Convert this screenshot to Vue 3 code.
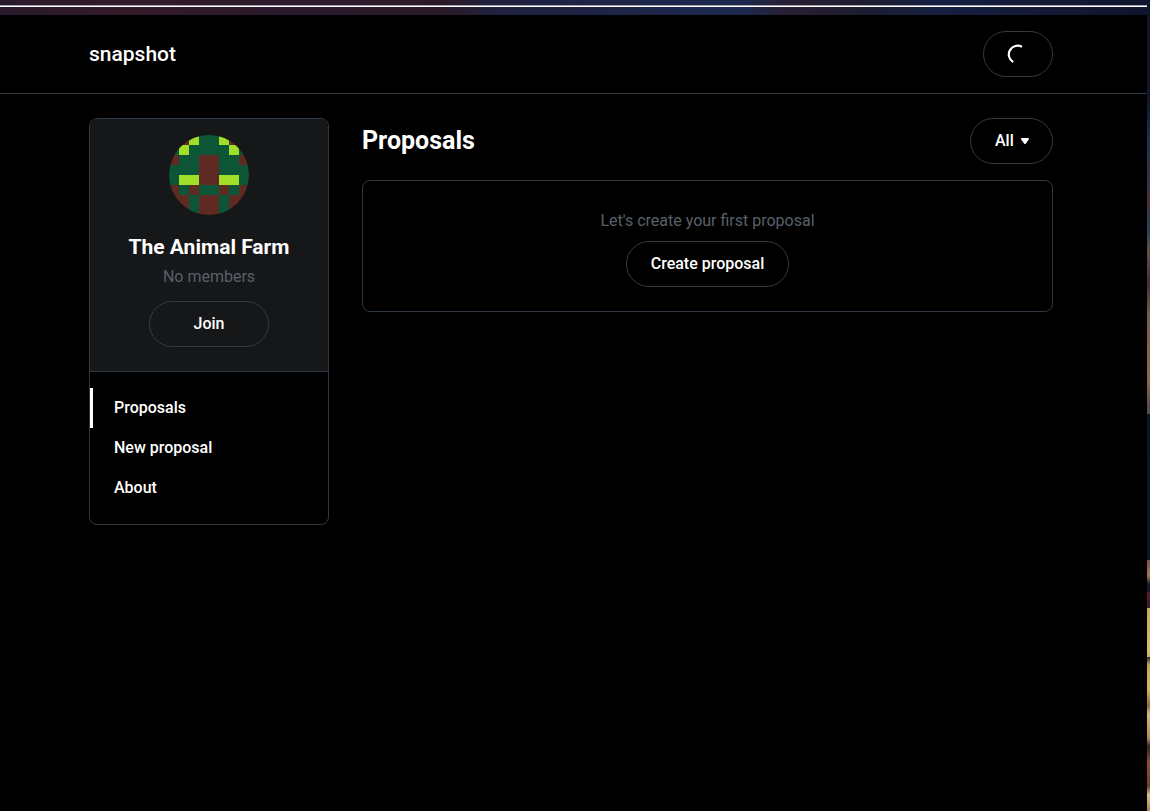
<script setup>
import { ref } from 'vue'

const filter = ref('all')
const active = ref('Proposals')
const links = ['Proposals', 'New proposal', 'About']

// Left half of the avatar; every row is mirrored. g: green, b: brown, l: lime
const rows = ['gblg', 'glgg', 'bggb', 'gggb', 'gllb', 'bgbg', 'bbgb', 'bbgb']
const cells = rows.flatMap((row, y) =>
  [...row, ...[...row].reverse()].map((tone, x) => ({ tone, x, y }))
)
</script>

<template>
  <div class="desktop">
    <div class="window-edge"></div>
    <div class="app">
      <header class="topbar">
        <a class="brand" href="#">snapshot</a>
        <button class="pill account" type="button" aria-label="Loading account">
          <svg width="20" height="20" viewBox="0 0 20 20" fill="none" aria-hidden="true">
            <path d="M18 2.900A8.600 8.600 0 0 0 9.200 18.100" stroke="#fff" stroke-width="2.200" />
          </svg>
        </button>
      </header>

      <div class="layout">
        <aside class="space">
          <div class="profile">
            <svg class="avatar" viewBox="0 0 8 8" shape-rendering="crispEdges" aria-hidden="true">
              <rect v-for="c in cells" :key="`${c.x}-${c.y}`" :class="c.tone" :x="c.x" :y="c.y" width="1" height="1" />
            </svg>
            <h2>The Animal Farm</h2>
            <p class="muted">No members</p>
            <button class="pill join" type="button">Join</button>
          </div>
          <nav>
            <a
              v-for="link in links"
              :key="link"
              href="#"
              :class="{ active: link === active }"
              @click.prevent="active = link"
            >{{ link }}</a>
          </nav>
        </aside>

        <main>
          <div class="heading">
            <h1>Proposals</h1>
            <div class="filter">
              <select v-model="filter" class="pill" aria-label="Filter proposals">
                <option value="all">All</option>
              </select>
              <svg width="8" height="7" viewBox="0 0 8 7" fill="#fff" aria-hidden="true">
                <path d="M0.800 0h6.400c.8 0 1 .8.6 1.400L4.700 5.800c-.4.5-1 .5-1.400 0L.2 1.400C-.2.8 0 0 .8 0z" />
              </svg>
            </div>
          </div>
          <section class="empty">
            <p class="muted">Let's create your first proposal</p>
            <button class="pill" type="button">Create proposal</button>
          </section>
        </main>
      </div>
    </div>
  </div>
</template>

<style>
body {
  background: #000;
}
</style>

<style scoped>
* {
  box-sizing: border-box;
}
.desktop {
  display: flex;
  flex-direction: column;
  min-height: 100vh;
  padding-right: 3px;
  font: 500 16px/24px Roboto, sans-serif;
  color: #fff;
  background: linear-gradient(
    #10152d 0, #10152d 12%, #1c3154 17%, #45323f 25%, #24405a 28%, #655049 31%, #492d36 35%,
    #785c4c 39%, #8a6848 47%, #5b4b4d 50%, #5b4b4d 51%, #0b1427 51%, #0c1626 69%,
    #7d5148 69%, #a87761 71%, #1d1728 72%, #181426 73%, #641923 73%, #39182a 75%,
    #c7a961 75%, #d8bd75 80%, #d0b26a 81%, #2a201b 81%, #c7a560 82%, #d8b569 85%,
    #8f6940 87%, #d8b978 88%, #b88b54 91%, #392226 92%, #8c4c37 94%, #71402f 97%,
    #dbbe88 98%, #ab8350 100%
  );
}
.window-edge {
  height: 15px;
  margin-right: -3px;
  background:
    linear-gradient(#a29fae, #a29fae) 0 5px / calc(100% - 3px) 1px no-repeat,
    linear-gradient(#fff, #fff) 0 6px / calc(100% - 3px) 1px no-repeat,
    linear-gradient(90deg, #281a2b, #341a29 11%, #2a1a2c 25%, #2a1a29 39%, #20213f 43%,
      #1d2548 56%, #1c2a50 64%, #281e31 69%, #1d1d30 75%, #151f43 82%, #141a35 91%, #10152d);
}
.app {
  flex: 1;
  background: #000;
}
.topbar {
  display: flex;
  align-items: center;
  justify-content: space-between;
  padding: 16px 94px 16px 89px;
  border-bottom: 1px solid #2f3943;
}
.brand {
  font-size: 21px;
  color: #fff;
  text-decoration: none;
}
.pill {
  height: 46px;
  padding: 0 24px;
  border: 1px solid #323b44;
  border-radius: 23px;
  background: transparent;
  color: #fff;
  font: inherit;
  text-align: center;
  cursor: pointer;
}
.account {
  display: flex;
  align-items: center;
  width: 70px;
  padding: 0 20px;
}
.layout {
  display: flex;
  align-items: flex-start;
  gap: 33px;
  padding: 24px 94px 24px 89px;
}
.space {
  flex: 0 0 240px;
  overflow: hidden;
  border: 1px solid #2f3943;
  border-radius: 8px;
}
.profile {
  display: flex;
  flex-direction: column;
  align-items: center;
  padding: 16px 16px 24px;
  border-bottom: 1px solid #2f3943;
  background: #161718;
}
.avatar {
  width: 80px;
  height: 80px;
  border-radius: 50%;
}
.g {
  fill: #0c5637;
}
.b {
  fill: #5f2a22;
}
.l {
  fill: #a2df28;
}
h1,
h2,
p {
  margin: 0;
}
h2 {
  margin-top: 16px;
  font-size: 21px;
  font-weight: 700;
  line-height: 32px;
}
.muted {
  color: #586069;
  font-weight: 400;
}
.profile .muted {
  margin: 2px 0 12px;
}
.join {
  width: 120px;
}
nav {
  display: flex;
  flex-direction: column;
  padding: 16px 0;
}
nav a {
  padding: 0 24px;
  line-height: 40px;
  color: #fff;
  text-decoration: none;
}
nav a.active {
  padding-left: 21px;
  border-left: 3px solid #fff;
}
main {
  flex: 1;
  min-width: 0;
}
.heading {
  display: flex;
  justify-content: space-between;
  margin-bottom: 16px;
}
h1 {
  font-size: 25px;
  font-weight: 700;
  line-height: 46px;
}
.filter {
  position: relative;
}
.filter select {
  width: 83px;
  appearance: none;
  text-align: left;
}
.filter svg {
  position: absolute;
  top: 20px;
  right: 24px;
  pointer-events: none;
}
.empty {
  display: flex;
  flex-direction: column;
  align-items: center;
  gap: 8px;
  padding: 28px 24px 24px;
  border: 1px solid #2f3943;
  border-radius: 8px;
}
</style>
